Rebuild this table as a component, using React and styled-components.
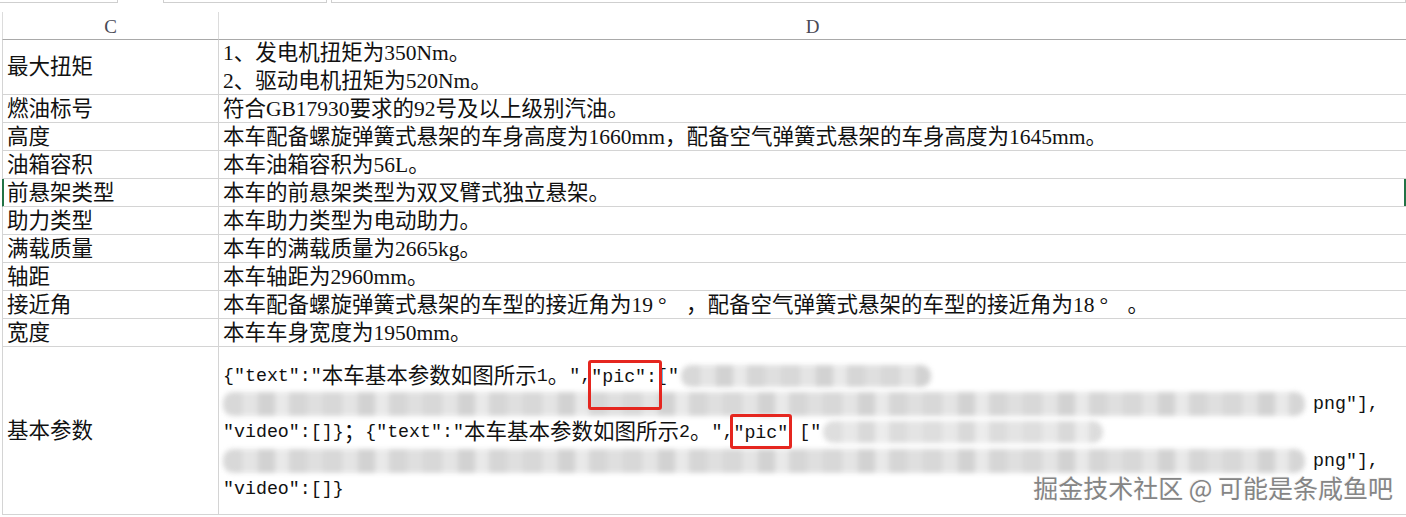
import React from 'react';
import styled, { createGlobalStyle, css } from 'styled-components';

const GREEN = '#217346';
const GRID = '#d4d4d4';
const RED = '#e5261f';

const Global = createGlobalStyle`
  html, body { margin: 0; padding: 0; background: #fff; }
  body {
    width: 1406px; height: 517px; overflow: hidden;
    font-family: "Liberation Serif", "Noto Sans CJK SC", serif;
    color: #111;
  }
`;

const Page = styled.div`
  position: relative;
  width: 1406px;
  height: 517px;
  overflow: hidden;
  background: #fff;
`;

const TabStrip = styled.div`
  display: flex;
  height: 3px;
`;

const TabStub = styled.div`
  box-sizing: border-box;
  height: 3px;
  width: ${p => p.$w}px;
  margin-left: ${p => p.$ml || 0}px;
  border: 1px solid #cfcfcf;
  border-top: none;
  ${p => p.$noLeft && css`border-left: none;`}
`;

const Sheet = styled.div`
  display: grid;
  grid-template-columns: 217px 1fr;
  margin: 9px 0 0 2px;
`;

const HeadCell = styled.div`
  box-sizing: border-box;
  height: 28px;
  display: flex;
  align-items: center;
  justify-content: center;
  font-family: "Liberation Serif", serif;
  font-size: 19px;
  color: #4a4a55;
  border-bottom: 1px solid #a9a9a9;
  ${p => p.$first ? css`border-left: 1px solid #dcdcdc; border-right: 1px solid #dcdcdc;` : ''}
  padding-top: 2px;
`;

const Cell = styled.div`
  box-sizing: border-box;
  height: ${p => p.$h || 28}px;
  display: flex;
  flex-direction: column;
  justify-content: center;
  padding: ${p => p.$pt || 0}px 4px 0 4px;
  font-size: 21.5px;
  line-height: 28px;
  white-space: nowrap;
  border-bottom: 1px solid ${GRID};
  ${p => p.$label && css`
    border-left: 1px solid ${GRID};
    border-right: 1px solid ${GRID};
  `}
  ${p => p.$sel && p.$label && css`
    border-left-color: ${GREEN};
    box-shadow: inset 1px 0 0 ${GREEN};
  `}
  ${p => p.$sel && !p.$label && css`
    box-shadow: inset -2px 0 0 ${GREEN};
  `}
`;

const Line = styled.div`
  flex: none;
  height: ${p => p.$lh || 28}px;
  line-height: ${p => p.$lh || 28}px;
  display: flex;
  align-items: center;
  white-space: pre;
`;

const Mono = styled.span`
  font-family: "Liberation Mono", "DejaVu Sans Mono", monospace;
  font-size: 18.3px;
`;

const Deg = styled.span`
  display: inline-block;
  box-sizing: border-box;
  width: 33px;
  padding-left: 5px;
`;

const Mark = styled.span`
  position: relative;
  z-index: 2;
  &::after {
    content: '';
    position: absolute;
    left: ${p => p.$l}px;
    right: ${p => p.$r}px;
    top: ${p => p.$t}px;
    bottom: ${p => p.$b}px;
    border: 3px solid ${RED};
    border-radius: 3px;
  }
`;

const Smudge = styled.span`
  display: inline-block;
  width: ${p => p.$w}px;
  height: ${p => p.$h || 24}px;
  margin: 0 ${p => p.$mr || 0}px 0 ${p => p.$ml || 0}px;
  border-radius: 10px;
  background:
    repeating-linear-gradient(90deg,
      #d6d6d6 0 19px, #e3e3e3 19px 35px, #d0d0d0 35px 52px,
      #e8e8e8 52px 66px, #d4d4d4 66px 84px, #dedede 84px 100px);
  filter: blur(2.6px);
  opacity: ${p => p.$o || 0.95};
`;

const Watermark = styled.div`
  position: absolute;
  right: 13px;
  bottom: 15px;
  z-index: 3;
  font-family: "Noto Sans CJK SC", "Noto Sans", sans-serif;
  font-size: 25px;
  line-height: 30px;
  color: #858585;
  text-shadow: 1px 1px 0 #fff, -1px -1px 0 #f4f4f4;
  white-space: nowrap;
`;

const ASCII = /([\x20-\x7E\u2033]+)/;
const mixed = s =>
  s.split(ASCII).filter(Boolean).map((part, i) =>
    /^[\x20-\x7E\u2033]+$/.test(part) ? <Mono key={i}>{part}</Mono> : <React.Fragment key={i}>{part}</React.Fragment>
  );

const rows = [
  { k: '最大扭矩', v: ['1、发电机扭矩为350Nm。', '2、驱动电机扭矩为520Nm。'], h: 55 },
  { k: '燃油标号', v: ['符合GB17930要求的92号及以上级别汽油。'] },
  { k: '高度', v: ['本车配备螺旋弹簧式悬架的车身高度为1660mm，配备空气弹簧式悬架的车身高度为1645mm。'] },
  { k: '油箱容积', v: ['本车油箱容积为56L。'] },
  { k: '前悬架类型', v: ['本车的前悬架类型为双叉臂式独立悬架。'], sel: true },
  { k: '助力类型', v: ['本车助力类型为电动助力。'] },
  { k: '满载质量', v: ['本车的满载质量为2665kg。'] },
  { k: '轴距', v: ['本车轴距为2960mm。'] },
  { k: '接近角', deg: true },
  { k: '宽度', v: ['本车车身宽度为1950mm。'] },
];

const Q = '\u2033';

export default function App() {
  return (
    <Page>
      <Global />
      <TabStrip>
        <TabStub $w={119} $noLeft />
        <TabStub $w={164} $ml={45} />
        <TabStub $w={1080} $ml={4} />
      </TabStrip>
      <Sheet>
        <HeadCell $first>C</HeadCell>
        <HeadCell>D</HeadCell>
        {rows.map(r => (
          <React.Fragment key={r.k}>
            <Cell $label $sel={r.sel} $h={r.h}>{r.k}</Cell>
            <Cell $sel={r.sel} $h={r.h}>
              {r.deg ? (
                <Line>
                  本车配备螺旋弹簧式悬架的车型的接近角为19<Deg>°</Deg>，配备空气弹簧式悬架的车型的接近角为18<Deg>°</Deg>。
                </Line>
              ) : (
                r.v.map(t => <Line key={t}>{t}</Line>)
              )}
            </Cell>
          </React.Fragment>
        ))}
        <Cell $label $h={168}>基本参数</Cell>
        <Cell $h={168} $pt={4}>
          <Line $lh={28.3}>
            {mixed(`{${Q}text${Q}:${Q}本车基本参数如图所示1。${Q},`)}
            <Mark $l={-3} $r={-5} $t={-1} $b={-19}>{mixed(`${Q}pic${Q}:`)}</Mark>
            {mixed(`[${Q}`)}
            <Smudge $w={250} $h={22} $ml={2} />
          </Line>
          <Line $lh={28.3}>
            <Smudge $w={1082} $h={24} $mr={8} />
            {mixed(`png${Q}],`)}
          </Line>
          <Line $lh={28.3}>
            {mixed(`${Q}video${Q}:[]}；{${Q}text${Q}:${Q}本车基本参数如图所示2。${Q},`)}
            <Mark $l={-3} $r={-4} $t={-3} $b={-1}>{mixed(`${Q}pic${Q}`)}</Mark>
            {mixed(` [${Q}`)}
            <Smudge $w={280} $h={22} $ml={2} $o={0.8} />
          </Line>
          <Line $lh={28.3}>
            <Smudge $w={1082} $h={24} $mr={8} />
            {mixed(`png${Q}],`)}
          </Line>
          <Line $lh={28.3}>{mixed(`${Q}video${Q}:[]}`)}</Line>
        </Cell>
      </Sheet>
      <Watermark>掘金技术社区 @ 可能是条咸鱼吧</Watermark>
    </Page>
  );
}
